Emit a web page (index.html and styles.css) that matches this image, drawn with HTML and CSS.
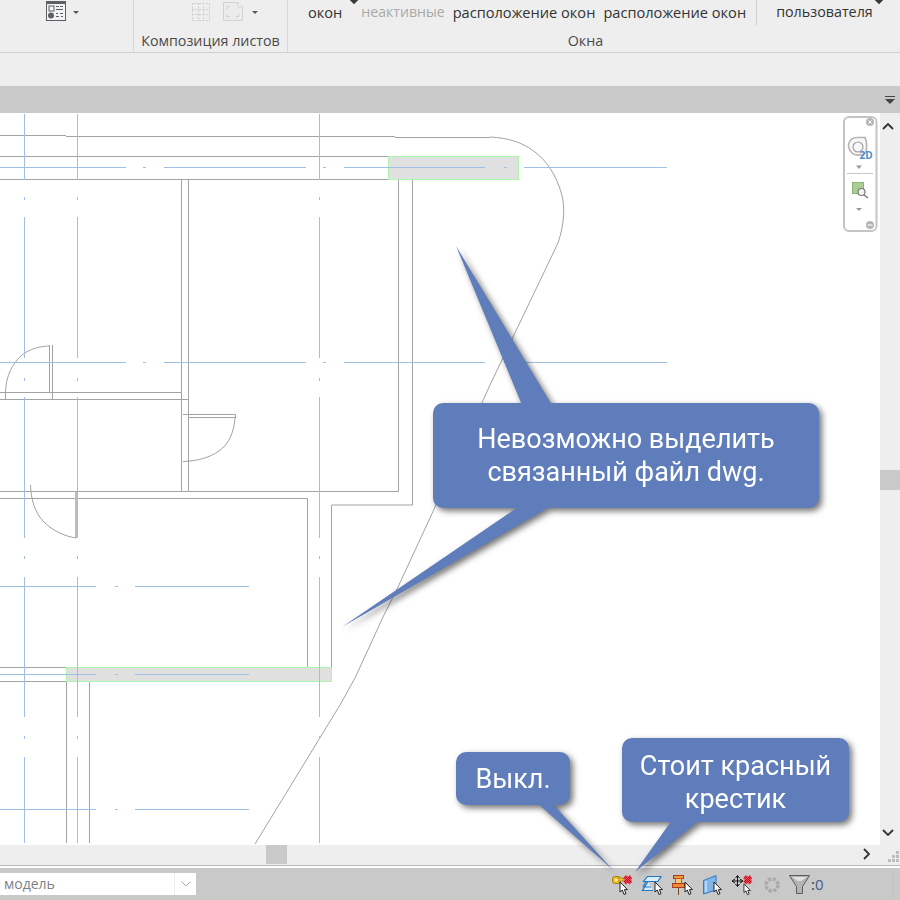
FILE: index.html
```html
<!DOCTYPE html>
<html lang="ru">
<head>
<meta charset="utf-8">
<title>Revit</title>
<link rel="stylesheet" href="styles.css">
</head>
<body>
<svg class="defs" width="0" height="0" aria-hidden="true">
  <symbol id="cur" viewBox="0 0 9 15">
    <path d="M1 1V11L3.4 9L5 13.5L7 12.6L5.4 8.6H8.4Z" fill="#fff" stroke="#222" stroke-width="1"/>
  </symbol>
  <pattern id="redx" width="2" height="2" patternUnits="userSpaceOnUse">
    <rect width="2" height="2" fill="#e8505c"/>
    <rect width="1" height="1" fill="#c80818"/><rect x="1" y="1" width="1" height="1" fill="#c80818"/>
  </pattern>
</svg>
<div class="app">
  <header class="ribbon">
    <section class="panel panel-views">
      <div class="tools tools-views">
        <svg class="ico-schedule" width="20" height="20" viewBox="0 0 20 20">
          <rect x=".5" y=".5" width="19" height="19" fill="#f3f3f3" stroke="#5b6166"/>
          <rect x="0" y="0" width="20" height="3" fill="#5b6166"/>
          <rect x="3" y="5" width="5" height="5" fill="#f3f3f3" stroke="#5b6166"/>
          <circle cx="5" cy="14.500" r="3" fill="#5b6166"/>
          <path d="M10 5.500H13M14 5.500H17M10 8.500H17M10 12.500H12M14 12.500H17M10 15.500H13M15 15.500H17" stroke="#5b6166"/>
        </svg>
        <span class="caret caret-schedule"></span>
      </div>
      <div class="panel-label"></div>
    </section>
    <section class="panel panel-sheets">
      <div class="tools tools-sheets">
        <svg class="ico-grid" width="18" height="20" viewBox="0 0 18 20">
          <path d="M.5 1V19M6.500 1V19M11.500 1V19M17.500 1V19M0 1.500H18M0 7.500H18M0 12.500H18M0 18.500H18" fill="none" stroke="#cfcfcf" stroke-dasharray="2 1.500"/>
        </svg>
        <svg class="ico-sheet" width="20" height="19" viewBox="0 0 20 19">
          <path d="M.5 .5H15L19.500 5V18.500H.5Z" fill="#ececec" stroke="#d2d2d2"/>
          <path d="M15 .5V5H19.500" fill="#f6f6f6" stroke="#d2d2d2"/>
          <path d="M4 7V4.500H7M4 12V14.500H7M13 14.500H16V12" fill="none" stroke="#cfcfcf"/>
        </svg>
        <span class="caret caret-sheet"></span>
      </div>
      <div class="panel-label">Композиция листов</div>
    </section>
    <section class="panel panel-windows">
      <div class="tools tools-windows">
        <div class="tool tool-switch">окон</div>
        <span class="diamond diamond-switch"></span>
        <div class="tool tool-close is-off">неактивные</div>
        <div class="tool tool-cascade">расположение окон</div>
        <div class="tool tool-tile">расположение окон</div>
        <span class="tool-sep"></span>
        <div class="tool tool-user">пользователя</div>
        <span class="diamond diamond-user"></span>
      </div>
      <div class="panel-label">Окна</div>
    </section>
  </header>
  <div class="subbar"></div>
  <div class="titlebar">
    <svg class="ico-menu" width="10" height="8" viewBox="0 0 10 8"><path d="M0 .5H10" stroke="#444"/><path d="M0 3H10L5 8Z" fill="#444"/></svg>
  </div>
  <main class="work">
    <div class="canvas">
      <svg class="drawing" width="880" height="732" viewBox="0 113 880 732">
        <rect class="hatch" x="388.500" y="156.500" width="130" height="23"/>
        <rect class="hatch" x="66.500" y="667.500" width="265" height="14"/>
        <path class="wall" d="M0 135.500H66M66 136.500H395M395 137.500H490M0 156.500H388M0 179.500H388
          M181.500 180V491M188.500 180V491M398.500 180V491.500H0M412.500 180V505H331.500V667M0 392.500H181M0 399.500H188M0 498.500H307.500V667
          M49.500 345V392M52.500 345V399M5.500 392V399M183 414.500H235.500V418M188 417.500H235.500
          M0 667.500H66M0 681.500H66M66.500 682V843M89.500 682V843"/>
        <path class="wall-soft" d="M76 492V538"/>
        <path class="thin" d="M490 137C508 138 522 142 535 152C548 162 556 176 561 192C565 205 565 222 558 243L490 385L430 518L398 587L383 617L355 678L340 705L255 844
          M5.500 392C6 376 12 364 22 355C30 349 40 346 50 346
          M235 418C234 432 229 444 219 451C209 458 197 461 183 461.500
          M30.500 485C31 500 35 513 44 522C53 531 64 536 76 538"/>
        <path class="grid" d="M24.500 114V180M24.500 197V200M24.500 217V358M24.500 378V381M24.500 397V538M24.500 556V559M24.500 577V717M24.500 736V739M24.500 757V843
          M77.500 114V180M77.500 197V200M77.500 217V358M77.500 378V381M77.500 397V538M77.500 556V559M77.500 577V717M77.500 736V739M77.500 757V843
          M319.500 114V180M319.500 197V200M319.500 217V358M319.500 378V381M319.500 397V538M319.500 556V559M319.500 577V717M319.500 736V739M319.500 757V843
          M0 167.500H126M143 167.500H146M164 167.500H306M323 167.500H326M344 167.500H485M504 167.500H507M524 167.500H667
          M0 362.500H126M143 362.500H146M164 362.500H306M323 362.500H326M344 362.500H485M504 362.500H507M524 362.500H667
          M0 586.500H96M115 586.500H118M135 586.500H249M0 674.500H96M115 674.500H118M135 674.500H249M0 809.500H96M115 809.500H118M135 809.500H249"/>
      </svg>
      <aside class="navbar">
        <svg width="36" height="118" viewBox="0 0 36 118">
          <rect x="1" y="1" width="32.500" height="114" rx="5" fill="#fff" stroke="#c4c4c4" stroke-width="2"/>
          <circle cx="27" cy="6" r="4" fill="#b5b5b5"/>
          <path d="M25.500 4.500L28.500 7.500M28.500 4.500L25.500 7.500" stroke="#fff"/>
          <path d="M14 21.500H22C24 25 24 32 23 36C20 40 12 40 9 37C6 34 5 30 6 27C7 24 10 21.500 14 21.500Z" fill="#f8f8f8" stroke="#b4b4b4" stroke-width="1.600"/>
          <circle cx="15" cy="31" r="5" fill="none" stroke="#a0a0a0" stroke-width="1.200"/>
          <text class="nav-2d" x="16.500" y="43">2D</text>
          <path d="M13 49.500H19L16 53Z" fill="#9a9a9a"/>
          <path d="M4 57.500H30" stroke="#c8c8c8"/>
          <rect x="9.500" y="66.500" width="11" height="11" fill="#a9cf95" stroke="#8db37a"/>
          <circle cx="18.500" cy="76" r="3.500" fill="#f4f4f4" stroke="#777" stroke-width="1.200"/>
          <path d="M21 79L25 82" stroke="#777" stroke-width="1.500"/>
          <path d="M13 92H19L16 95Z" fill="#9a9a9a"/>
          <circle cx="27" cy="109" r="4" fill="#b5b5b5"/>
          <path d="M24.500 109H29.500" stroke="#fff"/>
        </svg>
      </aside>
    </div>
    <div class="vscroll">
      <svg class="chev" width="12" height="7" viewBox="0 0 12 7"><path d="M1 6L6 1L11 6" fill="none" stroke="#333" stroke-width="1.800"/></svg>
      <div class="vthumb"></div>
      <svg class="chev" width="12" height="7" viewBox="0 0 12 7"><path d="M1 1L6 6L11 1" fill="none" stroke="#333" stroke-width="1.800"/></svg>
    </div>
  </main>
  <div class="hscroll">
    <div class="hthumb"></div>
    <svg class="chev-r" width="7" height="12" viewBox="0 0 7 12"><path d="M1 1L6 6L1 11" fill="none" stroke="#333" stroke-width="1.800"/></svg>
    <svg class="grip" width="12" height="12" viewBox="0 0 12 12"><path d="M8 0h3v3H8zM4 4h3v3H4zM8 4h3v3H8zM0 8h3v3H0zM4 8h3v3H4zM8 8h3v3H8z" fill="#bcbcbc"/></svg>
  </div>
  <footer class="status">
    <div class="model-select"><span class="model-name">модель</span><span class="model-btn"><svg width="10" height="6" viewBox="0 0 10 6"><path d="M.5 .5L5 5L9.500 .5" fill="none" stroke="#aaa"/></svg></span></div>
    <div class="status-icons">
      <svg class="st" width="24" height="24" viewBox="0 0 24 24">
        <rect x="1.500" y="4.500" width="8" height="7" rx="2.500" fill="#f2c230" stroke="#a67a10"/>
        <rect x="7" y="6" width="5" height="3" fill="#f2c230" stroke="#a67a10" stroke-width=".7"/>
        <rect x="4" y="7" width="3" height="2" fill="#fff3c0"/>
        <path d="M13.500 4.500L20 11M20 4.500L13.500 11" stroke="url(#redx)" stroke-width="4"/>
        <use href="#cur" x="8" y="9" width="9" height="15"/>
      </svg>
      <svg class="st" width="24" height="24" viewBox="0 0 24 24">
        <path d="M6.500 4.500H20L17 9.500H2.500ZM5 9.500L2 15M10 15H2M7 9.500L1.500 18.500H12" fill="#dcebf8" stroke="#1c78c8" stroke-width="1.200"/>
        <use href="#cur" x="13" y="9" width="9" height="15"/>
      </svg>
      <svg class="st" width="24" height="24" viewBox="0 0 24 24">
        <rect x="2.500" y="3.500" width="10" height="3" fill="#ef9c40" stroke="#a83a20"/>
        <rect x="4.500" y="6.500" width="6" height="5" fill="#f7c67a" stroke="#c05a20"/>
        <rect x="1.500" y="11.500" width="12" height="4" fill="#ee8a30" stroke="#a83a20"/>
        <path d="M7.500 16V23" stroke="#7a4a20"/>
        <use href="#cur" x="13" y="9" width="9" height="15"/>
      </svg>
      <svg class="st" width="24" height="24" viewBox="0 0 24 24">
        <path d="M2.500 8.500L15 3.500V18L2.500 22Z" fill="#7fb5e8" stroke="#2f7cc4"/>
        <path d="M5 9V20" stroke="#b8d8f5" stroke-width="2"/>
        <use href="#cur" x="12" y="9" width="9" height="15"/>
      </svg>
      <svg class="st" width="24" height="24" viewBox="0 0 24 24">
        <path d="M6.500 4V14M1.500 9H11.500M4.500 6L6.500 3.500L8.500 6M4.500 12L6.500 14.500L8.500 12M4 7L1 9L4 11M9 7L12 9L9 11" fill="none" stroke="#111"/>
        <path d="M13.500 4.500L20 11M20 4.500L13.500 11" stroke="url(#redx)" stroke-width="4"/>
        <use href="#cur" x="11.500" y="11" width="9" height="13"/>
      </svg>
      <svg class="st st-ring" width="24" height="24" viewBox="0 0 24 24">
        <circle cx="11" cy="13" r="6" fill="none" stroke="#a9a9a9" stroke-width="3.500" stroke-dasharray="3.200 1.500"/>
      </svg>
      <svg class="st-funnel" width="21" height="24" viewBox="0 0 21 24">
        <path d="M.5 1.500H20.500L13.500 12.500V19.500H7.500V12.500Z" fill="#b4b4b4" stroke="#5c5c5c"/>
        <path d="M3 3H18L12 7H9Z" fill="#e2e2e2"/>
      </svg>
      <span class="filter-count">:<span class="filter-num">0</span></span>
    </div>
    <span class="status-sep"></span>
  </footer>
</div>
<div class="callouts">
  <svg class="tails" width="900" height="900" viewBox="0 0 900 900">
    <path d="M456 246L522 405H552Z"/>
    <path d="M342 627L521 505H553Z"/>
    <path d="M613 870L537 803H552Z"/>
    <path d="M635 872L672 820H700Z"/>
  </svg>
  <div class="callout callout-main">Невозможно выделить<br>связанный файл dwg.</div>
  <div class="callout callout-off">Выкл.</div>
  <div class="callout callout-x">Стоит красный<br>крестик</div>
</div>
</body>
</html>
```

FILE: styles.css
```css
* { box-sizing: border-box; }
html, body { margin: 0; padding: 0; }
body {
  position: relative;
  width: 900px;
  height: 900px;
  overflow: hidden;
  background: #fff;
  font-family: "Open Sans", "Noto Sans", sans-serif;
}
.defs { position: absolute; }
.app { display: flex; flex-direction: column; height: 900px; }

/* ribbon */
.ribbon {
  display: flex;
  flex: 0 0 53px;
  overflow: hidden;
  background: #eee;
  border-bottom: 1px solid #cfcfcf;
}
.panel { display: flex; flex-direction: column; height: 52px; }
.panel-views { flex: 0 0 134px; border-right: 1px solid #d8d8d8; }
.panel-sheets { flex: 0 0 154px; border-right: 1px solid #d8d8d8; }
.panel-windows { flex: 0 0 595px; }
.tools { display: flex; flex: 0 0 30px; align-items: flex-start; }
.panel-label {
  flex: 0 0 22px;
  font-size: 14.3px;
  line-height: 22px;
  text-align: center;
  color: #4a4a4a;
  white-space: nowrap;
}
.tools-views { padding: 1px 0 0 46px; }
.tools-sheets { padding: 2px 0 0 58px; }
.ico-sheet { margin-left: 13px; }
.caret { width: 0; height: 0; border: 3px solid transparent; border-top-color: #555; border-bottom-width: 0; }
.caret-schedule { margin: 10px 0 0 7px; }
.caret-sheet { margin: 9px 0 0 9px; }
.tools-windows { padding-left: 20px; }
.tool {
  flex: none;
  margin-top: 3px;
  font-size: 14.6px;
  line-height: 18px;
  color: #333;
  white-space: nowrap;
}
.is-off { color: #a9a9a9; font-size: 14.1px; }
.diamond { flex: none; width: 6px; height: 6px; margin-top: -3px; background: #3a3a3a; transform: rotate(45deg); }
.diamond-switch { margin-left: 9px; }
.tool-close { margin-left: 4px; }
.tool-cascade { margin-left: 8px; }
.tool-tile { margin-left: 8px; }
.tool-sep { flex: none; width: 1px; height: 25px; margin-left: 10px; background: #d0d0d0; }
.tool-user { margin-left: 19px; font-size: 14.3px; }
.diamond-user { margin-left: 3px; }

.subbar { flex: 0 0 33px; background: #eee; }
.titlebar {
  display: flex;
  flex: 0 0 27px;
  align-items: center;
  justify-content: flex-end;
  padding-right: 5px;
  background: #c9c9c9;
}

/* work area */
.work { display: flex; flex: 0 0 732px; }
.canvas { position: relative; flex: 0 0 880px; overflow: hidden; background: #fff; }
.drawing { display: block; }
.hatch { fill: #e0e0e0; stroke: #aef5ae; stroke-width: 1; }
.wall { fill: none; stroke: #a3a3a3; stroke-width: 1; }
.wall-soft { fill: none; stroke: #bdbdbd; stroke-width: 2; }
.thin { fill: none; stroke: #a2a2a2; stroke-width: 1; }
.grid { fill: none; stroke: #9fc0e4; stroke-width: 1; }
.navbar { position: absolute; top: 3px; right: 1px; width: 36px; height: 118px; }
.navbar svg { display: block; }
.nav-2d { font-family: "Open Sans", sans-serif; font-size: 10px; font-weight: 700; fill: #4a8fd0; }

.vscroll {
  display: flex;
  flex: 0 0 20px;
  flex-direction: column;
  align-items: center;
  padding: 10px 0 9px;
  background: #eee;
}
.chev { flex: none; margin-left: -4px; }
.vthumb { flex: 0 0 20px; width: 20px; margin: 340px 0 auto; background: #c9c9c9; }

.hscroll {
  display: flex;
  flex: 0 0 21px;
  align-items: flex-start;
  background: #eee;
  border-bottom: 1px solid #b8b8b8;
}
.hthumb { flex: 0 0 21px; height: 19px; margin-left: 266px; background: #c9c9c9; }
.chev-r { margin: 3px 0 0 576px; }
.grip { margin: 6px 0 0 18px; }

/* status bar */
.status {
  display: flex;
  flex: 0 0 32px;
  align-items: center;
  margin-top: 2px;
  background: #c9c9c9;
}
.model-select {
  display: flex;
  flex: 0 0 196px;
  height: 22px;
  align-items: center;
  justify-content: space-between;
  padding-left: 4px;
  background: #fff;
}
.model-name { font-size: 14px; line-height: 24px; color: #7d8288; }
.model-btn {
  display: flex;
  width: 22px;
  height: 22px;
  align-items: center;
  justify-content: center;
  border-left: 1px solid #eee;
}
.status-icons { display: flex; align-items: center; margin-left: 415px; }
.st { flex: none; margin-right: 6px; }
.st-funnel { flex: none; margin: 4px 0 0 -2px; }
.filter-count { margin-left: 1px; font-size: 15px; color: #333; }
.filter-num { color: #3a5f8f; }
.status-sep { width: 1px; height: 30px; margin-left: auto; margin-right: 6px; background: #c2c2c2; }

/* annotation callouts */
.callouts {
  position: absolute;
  inset: 0;
  pointer-events: none;
  filter: drop-shadow(3px 3px 3px rgba(0, 0, 0, .55));
}
.tails { position: absolute; top: 0; left: 0; fill: #5f7dba; }
.callout {
  position: absolute;
  display: flex;
  align-items: center;
  justify-content: center;
  border-radius: 10px;
  background: #5f7dba;
  color: #fff;
  font-family: Roboto, sans-serif;
  font-size: 27px;
  line-height: 33px;
  text-align: center;
}
.callout-main { left: 433px; top: 403px; width: 386px; height: 105px; }
.callout-off { left: 456px; top: 752px; width: 114px; height: 53px; padding-top: 2px; }
.callout-x { left: 622px; top: 738px; width: 227px; height: 84px; padding-top: 5px; }
```
